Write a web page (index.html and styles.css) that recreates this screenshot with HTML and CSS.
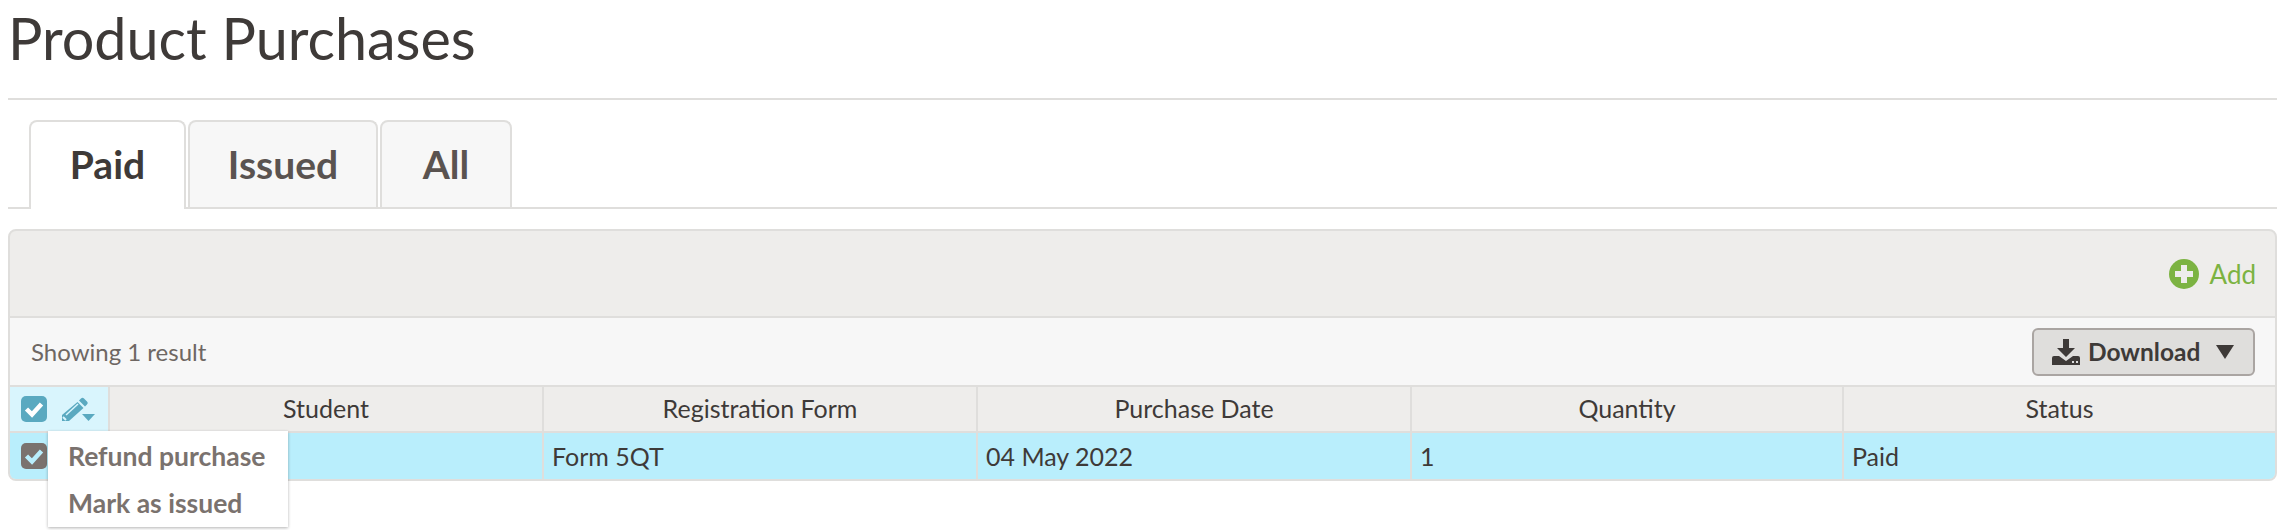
FILE: index.html
```html
<!DOCTYPE html>
<html lang="en">
<head>
    <meta charset="UTF-8">
    <title>Product Purchases</title>
    <link rel="stylesheet" href="styles.css">
</head>
<body>

<h1>Product Purchases</h1>

<div class="tabs">
    <a class="tab active">Paid</a>
    <a class="tab">Issued</a>
    <a class="tab">All</a>
</div>

<div class="panel">
    <div class="toolbar">
        <a class="add-link">
            <svg class="add-icon" viewBox="0 0 30 30"><circle cx="15" cy="15" r="15" fill="#7cb342"/><path d="M12 6h6v6h6v6h-6v6h-6v-6H6v-6h6z" fill="#eeedeb"/></svg>
            Add
        </a>
    </div>

    <div class="result-bar">
        <span>Showing 1 result</span>
        <button class="download-btn">
            <svg class="download-icon" viewBox="0 0 28 26"><path d="M11 0h6v9h6l-9 9-9-9h6z" fill="#3e3a38"/><path d="M0 19a2 2 0 0 1 2-2h5l7 5 7-5h5a2 2 0 0 1 2 2v7H0z" fill="#3e3a38"/><rect x="20" y="22" width="2" height="2" fill="#ddd"/><rect x="24" y="22" width="2" height="2" fill="#ddd"/></svg>
            Download
            <span class="caret"></span>
        </button>
    </div>

    <div class="grid head-row">
        <div class="select-cell">
            <svg class="check" viewBox="0 0 26 26"><rect width="26" height="26" rx="5" fill="#5aa9c0"/><path d="M5.500 13l5.500 5.500 9.500-10.500" fill="none" stroke="#fff" stroke-width="4.500"/></svg>
            <svg class="pencil" viewBox="0 0 34 26"><path d="M20 2.500a2 2 0 0 1 3 0l3 3a2 2 0 0 1 0 3l-2 2-6-6z" fill="#5aa9c0"/><path d="M16.500 6l6 6L8 25H1v-6z" fill="#5aa9c0"/><path d="M5 19L17 8" stroke="#d9f5fd" stroke-width="1.500"/><path d="M2 21l3 3" stroke="#d9f5fd" stroke-width="2"/><path d="M21 18h13l-6.500 7z" fill="#5aa9c0"/></svg>
        </div>
        <div class="cell">Student</div>
        <div class="cell">Registration Form</div>
        <div class="cell">Purchase Date</div>
        <div class="cell">Quantity</div>
        <div class="cell">Status</div>
    </div>

    <div class="grid data-row">
        <div class="row-check">
            <svg class="check" viewBox="0 0 26 26"><rect width="26" height="26" rx="5" fill="#7a726e"/><path d="M5.500 13l5.500 5.500 9.500-10.500" fill="none" stroke="#b9eefc" stroke-width="4.500"/></svg>
        </div>
        <div class="cell"></div>
        <div class="cell">Form 5QT</div>
        <div class="cell">04 May 2022</div>
        <div class="cell">1</div>
        <div class="cell">Paid</div>
    </div>

    <div class="menu">
        <div class="menu-item">Refund purchase</div>
        <div class="menu-item">Mark as issued</div>
    </div>
</div>

</body>
</html>
```

FILE: styles.css
```css
html, body {
    height: 530px;
}

body {
    margin: 0;
    padding: 0 5px 0 8px;
    font-family: Lato, sans-serif;
    color: #3e3a38;
    background: white;
    overflow: hidden;
}

h1 {
    margin: 0;
    height: 98px;
    font-size: 57.500px;
    line-height: 75px;
    font-weight: 400;
    border-bottom: 2px solid #dfdedc;
}

.tabs {
    display: flex;
    gap: 2px;
    height: 87px;
    margin-top: 20px;
    padding-left: 21px;
    border-bottom: 2px solid #dfdedc;
}

.tab {
    height: 87px;
    box-sizing: border-box;
    padding-top: 19px;
    text-align: center;
    font-size: 39px;
    font-weight: 700;
    color: #5a5350;
    background: #f7f7f7;
    border: 2px solid #dfdedc;
    border-bottom: none;
    border-radius: 8px 8px 0 0;
}

.tab:nth-child(1) { width: 157px; }
.tab:nth-child(2) { width: 190px; }
.tab:nth-child(3) { width: 132px; }

.tab.active {
    height: 89px;
    color: #3e3a38;
    background: white;
}

.panel {
    position: relative;
    margin-top: 20px;
    border: 2px solid #dfdedc;
    border-radius: 8px;
    background: #eeedeb;
}

.toolbar {
    display: flex;
    justify-content: flex-end;
    align-items: center;
    height: 85px;
    padding-right: 19px;
    border-bottom: 2px solid #dfdedc;
    border-radius: 8px 8px 0 0;
}

.add-link {
    display: flex;
    align-items: center;
    gap: 11px;
    font-size: 26px;
    color: #7cb342;
}

.add-icon {
    width: 30px;
    height: 30px;
}

.result-bar {
    display: flex;
    justify-content: space-between;
    align-items: center;
    height: 67px;
    padding: 0 20px 0 21px;
    font-size: 24px;
    color: #6e6763;
    background: #f7f7f7;
    border-bottom: 2px solid #dfdedc;
}

.download-btn {
    display: flex;
    align-items: center;
    gap: 8px;
    width: 223px;
    height: 48px;
    padding: 0 19px 0 18px;
    font-family: inherit;
    font-size: 24.500px;
    font-weight: 700;
    color: #3e3a38;
    background: #dfdedc;
    border: 2px solid #aaa5a2;
    border-radius: 6px;
}

.download-icon {
    width: 28px;
    height: 26px;
}

.caret {
    width: 0;
    height: 0;
    margin-left: auto;
    border-left: 9px solid transparent;
    border-right: 9px solid transparent;
    border-top: 14px solid #3e3a38;
}

.grid {
    display: grid;
    grid-template-columns: 98px 434px 434px 434px 432px 1fr;
    font-size: 25px;
}

.head-row {
    height: 44px;
    border-bottom: 2px solid #dfdedc;
}

.head-row .cell {
    display: flex;
    align-items: center;
    justify-content: center;
    padding-bottom: 2px;
    border-left: 2px solid #dfdedc;
}

.select-cell {
    display: flex;
    align-items: center;
    gap: 14px;
    padding-left: 11px;
    background: #d9f5fd;
}

.check {
    width: 26px;
    height: 26px;
}

.pencil {
    width: 34px;
    height: 26px;
}

.data-row {
    height: 46px;
    background: #b9eefc;
    border-radius: 0 0 6px 6px;
}

.row-check {
    display: flex;
    align-items: center;
    padding-left: 11px;
}

.data-row .cell {
    display: flex;
    align-items: center;
    padding-left: 8px;
    border-left: 2px solid #dfdedc;
}

.menu {
    position: absolute;
    left: 38px;
    top: 200px;
    width: 240px;
    height: 96px;
    padding: 4px 0 0 20px;
    box-sizing: border-box;
    background: white;
    box-shadow: 0 1px 3px rgba(0, 0, 0, 0.3);
}

.menu-item {
    height: 47px;
    line-height: 42px;
    font-size: 26.500px;
    font-weight: 700;
    color: #7a726e;
}
```
